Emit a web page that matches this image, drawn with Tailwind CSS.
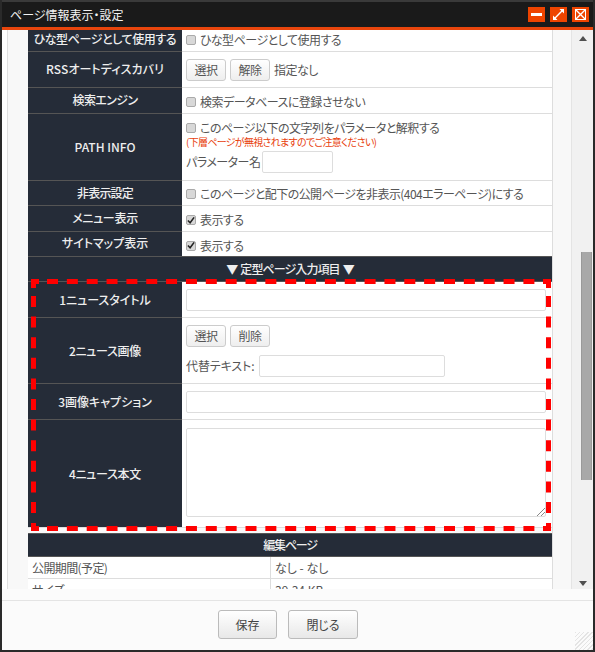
<!DOCTYPE html>
<html lang="ja"><head><meta charset="utf-8"><script src="https://cdn.jsdelivr.net/npm/@tailwindcss/browser@4"></script></head>
<body class="m-0 bg-white">
<div class="relative w-[595px] h-[652px] overflow-hidden flex flex-col border-x-2 border-b-2 border-t-0 border-[#2a2a2a] bg-[#fbfbfb] font-['Noto_Sans_CJK_JP',sans-serif] text-[12px] leading-[16px] text-[#555] [font-feature-settings:'palt']">
  <div class="h-[30px] shrink-0 bg-[#1a1a1a] border-t-2 border-[#3a3a3a] border-b-[3px] border-b-[#e8450c] flex items-center pl-[8px] pr-[4px] text-[#f4f4f4] text-[12px]">
    <span class="flex-1">ページ情報表示・設定</span>
    <div class="flex gap-[5px]">
      <span class="w-[17px] h-[15px] bg-[#ee4400] flex items-center justify-center"><svg width="11" height="3"><rect width="11" height="3" fill="#fff"/></svg></span>
      <span class="w-[17px] h-[15px] bg-[#ee4400] flex items-center justify-center"><svg width="13" height="13" viewBox="0 0 13 13" fill="#fff"><path d="M1 12V7.5L2.8 9.2 9.2 2.8 7.5 1H12V5.5L10.2 3.8 3.8 10.2 5.5 12Z"/></svg></span>
      <span class="w-[17px] h-[15px] bg-[#ee4400] flex items-center justify-center"><svg width="13" height="13" viewBox="0 0 13 13" fill="none" stroke="#fff"><rect x="1.5" y="1.5" width="10" height="10"/><path d="M1.5 1.5L11.5 11.5M11.5 1.5L1.5 11.5" stroke-width="1.4"/></svg></span>
    </div>
  </div>
  <div class="h-[559px] shrink-0 flex overflow-hidden">
    <div class="w-[6px] bg-white border-r border-[#e0e0e0]"></div>
    <div class="w-[564px] bg-[#f8f8f8] border-r border-[#e4e4e4] pl-[20px] overflow-hidden">
      <div class="w-[525px] border-r border-[#ddd] bg-white">
        <div class="flex h-[22px] border-b border-[#ddd]"><div class="w-[154px] shrink-0 bg-[#252c38] text-[#eee] font-medium tracking-[-0.4px] flex items-center justify-center pb-[3px] border-b border-[#555] -mb-px">ひな型ページとして使用する</div><div class="flex items-center pl-[4px] gap-[4px] tracking-[-0.5px] pb-[1px]"><span class="w-[10px] h-[10px] rounded-[2px] bg-[#d8d8d8] border border-[#aaa]"></span>ひな型ページとして使用する</div></div>
        <div class="flex h-[36px] border-b border-[#ddd]"><div class="w-[154px] shrink-0 bg-[#252c38] text-[#eee] font-medium tracking-[0.1px] flex items-center justify-center pb-[1px] border-b border-[#555] -mb-px">RSSオートディスカバリ</div><div class="flex items-center pl-[4px] gap-[4px] tracking-[-0.5px]"><span class="w-[40px] h-[22px] rounded-[3px] border border-[#ccc] bg-linear-to-b from-white to-[#eee] flex items-center justify-center">選択</span><span class="w-[40px] h-[22px] rounded-[3px] border border-[#ccc] bg-linear-to-b from-white to-[#eee] flex items-center justify-center">解除</span>指定なし</div></div>
        <div class="flex h-[26px] border-b border-[#ddd]"><div class="w-[154px] shrink-0 bg-[#252c38] text-[#eee] font-medium tracking-[-0.6px] flex items-center justify-center pb-[1px] border-b border-[#555] -mb-px">検索エンジン</div><div class="flex items-center pl-[4px] gap-[4px] tracking-[-0.5px] pt-[2px]"><span class="w-[10px] h-[10px] rounded-[2px] bg-[#d8d8d8] border border-[#aaa]"></span>検索データベースに登録させない</div></div>
        <div class="flex h-[67px] border-b border-[#ddd]"><div class="w-[154px] shrink-0 bg-[#252c38] text-[#eee] font-medium flex items-center justify-center border-b border-[#555] -mb-px">PATH INFO</div><div class="pl-[4px] pt-[6px] flex flex-col tracking-[-0.5px]"><div class="flex items-center gap-[4px] h-[16px]"><span class="w-[10px] h-[10px] rounded-[2px] bg-[#d8d8d8] border border-[#aaa]"></span>このページ以下の文字列をパラメータと解釈する</div><div class="text-[10px] leading-[12px] text-[#e8400c] tracking-[-0.7px]">(下層ページが無視されますのでご注意ください)</div><div class="flex items-center mt-[3px] gap-[2px]">パラメーター名<span class="w-[71px] h-[22px] rounded-[2px] border border-[#ddd] bg-white"></span></div></div></div>
        <div class="flex h-[25px] border-b border-[#ddd]"><div class="w-[154px] shrink-0 bg-[#252c38] text-[#eee] font-medium tracking-[-0.8px] flex items-center justify-center pb-[1px] border-b border-[#555] -mb-px">非表示設定</div><div class="flex items-center pl-[4px] gap-[4px] tracking-[-0.55px] pt-[2px]"><span class="w-[10px] h-[10px] rounded-[2px] bg-[#d8d8d8] border border-[#aaa]"></span>このページと配下の公開ページを非表示(404エラーページ)にする</div></div>
        <div class="flex h-[26px] border-b border-[#ddd]"><div class="w-[154px] shrink-0 bg-[#252c38] text-[#eee] font-medium tracking-[-0.3px] flex items-center justify-center pb-[1px] border-b border-[#555] -mb-px">メニュー表示</div><div class="flex items-center pl-[4px] gap-[4px] tracking-[-0.5px] pt-[3px]"><span class="w-[10px] h-[10px] rounded-[2px] bg-[#d8d8d8] border border-[#aaa] flex items-center justify-center"><svg width="9" height="9" viewBox="0 0 9 9" fill="none" stroke="#222" stroke-width="1.8"><path d="M1 4.5L3.5 7 8 1"/></svg></span>表示する</div></div>
        <div class="flex h-[25px] border-b border-[#555]"><div class="w-[154px] shrink-0 bg-[#252c38] text-[#eee] font-medium flex items-center justify-center pb-[3px]">サイトマップ表示</div><div class="flex items-center pl-[4px] gap-[4px] tracking-[-0.5px] pt-[3px]"><span class="w-[10px] h-[10px] rounded-[2px] bg-[#d8d8d8] border border-[#aaa] flex items-center justify-center"><svg width="9" height="9" viewBox="0 0 9 9" fill="none" stroke="#222" stroke-width="1.8"><path d="M1 4.5L3.5 7 8 1"/></svg></span>表示する</div></div>
        <div class="h-[25px] bg-[#252c38] text-[#eee] font-medium tracking-[-0.9px] flex items-center justify-center gap-[3px] border-b border-[#555]"><span>▼</span><span>定型ページ入力項目</span><span>▼</span></div>
        <div class="flex h-[36px] border-b border-[#ddd]"><div class="w-[154px] shrink-0 bg-[#252c38] text-[#eee] font-medium flex items-center justify-center border-b border-[#555] -mb-px">1ニュースタイトル</div><div class="flex items-center pl-[4px]"><span class="w-[360px] h-[22px] rounded-[2px] border border-[#ddd] bg-white"></span></div></div>
        <div class="flex h-[66px] border-b border-[#ddd]"><div class="w-[154px] shrink-0 bg-[#252c38] text-[#eee] font-medium tracking-[-0.3px] flex items-center justify-center border-b border-[#555] -mb-px">2ニュース画像</div><div class="pl-[4px] pt-[7px] flex flex-col gap-[8px] tracking-[-0.5px]"><div class="flex gap-[4px]"><span class="w-[40px] h-[22px] rounded-[3px] border border-[#ccc] bg-linear-to-b from-white to-[#eee] flex items-center justify-center">選択</span><span class="w-[40px] h-[22px] rounded-[3px] border border-[#ccc] bg-linear-to-b from-white to-[#eee] flex items-center justify-center">削除</span></div><div class="flex items-center gap-[5px] tracking-[-0.1px]">代替テキスト:<span class="w-[186px] h-[22px] rounded-[2px] border border-[#ddd] bg-white"></span></div></div></div>
        <div class="flex h-[36px] border-b border-[#ddd]"><div class="w-[154px] shrink-0 bg-[#252c38] text-[#eee] font-medium flex items-center justify-center border-b border-[#555] -mb-px">3画像キャプション</div><div class="flex items-center pl-[4px]"><span class="w-[360px] h-[22px] rounded-[2px] border border-[#ddd] bg-white"></span></div></div>
        <div class="flex h-[108px] border-b border-[#ddd]"><div class="w-[154px] shrink-0 bg-[#252c38] text-[#eee] font-medium tracking-[-0.3px] flex items-center justify-center">4ニュース本文</div><div class="pl-[4px] pt-[8px]"><span class="relative block w-[360px] h-[89px] rounded-[2px] border border-[#ddd] bg-white"><svg class="absolute right-0 bottom-0" width="9" height="9" stroke="#888"><path d="M1 9L9 1M5 9L9 5"/></svg></span></div></div>
        <div class="h-[5px] bg-[#f8f8f8]"></div>
        <div class="h-[24px] bg-[#252c38] text-[#eee] font-medium tracking-[-1.2px] flex items-center justify-center border-y border-[#555]">編集ページ</div>
        <div class="flex h-[22px] border-b border-[#ddd]"><div class="w-[243px] shrink-0 border-r border-[#ddd] pl-[4px] tracking-[-0.6px] flex items-center">公開期間(予定)</div><div class="pl-[4px] flex items-center">なし - なし</div></div>
        <div class="flex h-[22px] border-b border-[#ddd]"><div class="w-[243px] shrink-0 border-r border-[#ddd] pl-[4px] flex items-center">サイズ</div><div class="pl-[4px] flex items-center">39.34 KB</div></div>
      </div>
    </div>
    <div class="w-[21px] bg-[#f1f1f1] relative flex flex-col items-center">
      <svg class="mt-[6px]" width="8" height="5"><path d="M4 0L8 5H0Z" fill="#505050"/></svg>
      <div class="absolute left-[9px] right-[1px] top-[222px] h-[228px] bg-[#a8a8a8] border-x border-[#999]"></div>
      <svg class="absolute bottom-[3px]" width="8" height="5"><path d="M4 5L8 0H0Z" fill="#505050"/></svg>
    </div>
  </div>
  <div class="flex-1 flex flex-col bg-[#fbfbfb]">
    <div class="h-[12px] border-b border-[#e4e4e4]"></div>
    <div class="flex justify-center gap-[11px] pt-[9px] pr-[19px]">
      <span class="w-[59px] h-[29px] rounded-[3px] border border-[#bbb] bg-linear-to-b from-white to-[#e8e8e8] flex items-center justify-center text-[12px] text-[#444]">保存</span>
      <span class="w-[70px] h-[29px] rounded-[3px] border border-[#bbb] bg-linear-to-b from-white to-[#e8e8e8] flex items-center justify-center text-[12px] text-[#444]">閉じる</span>
    </div>
  </div>
  <div class="absolute right-0 bottom-0 w-[18px] h-[18px] bg-[repeating-linear-gradient(135deg,#e4e4e4_0,#e4e4e4_1px,transparent_1px,transparent_3px)]"></div>
  <svg class="absolute left-[-2px] top-0 pointer-events-none" width="595" height="652" fill="none" stroke="#f00" stroke-width="5">
    <path d="M47 281.5H546" stroke-dasharray="11 8.85"/>
    <path d="M47 528.5H543" stroke-dasharray="11 8.85"/>
    <path d="M33.5 296V520" stroke-dasharray="11 9.6"/>
    <path d="M548.5 296V520" stroke-dasharray="11 9.6"/>
    <path d="M33.5 288V281.5H39M33.5 523V528.5H39M543 281.5H548.5V288M543 528.5H548.5V523"/>
  </svg>
</div>
</body></html>
